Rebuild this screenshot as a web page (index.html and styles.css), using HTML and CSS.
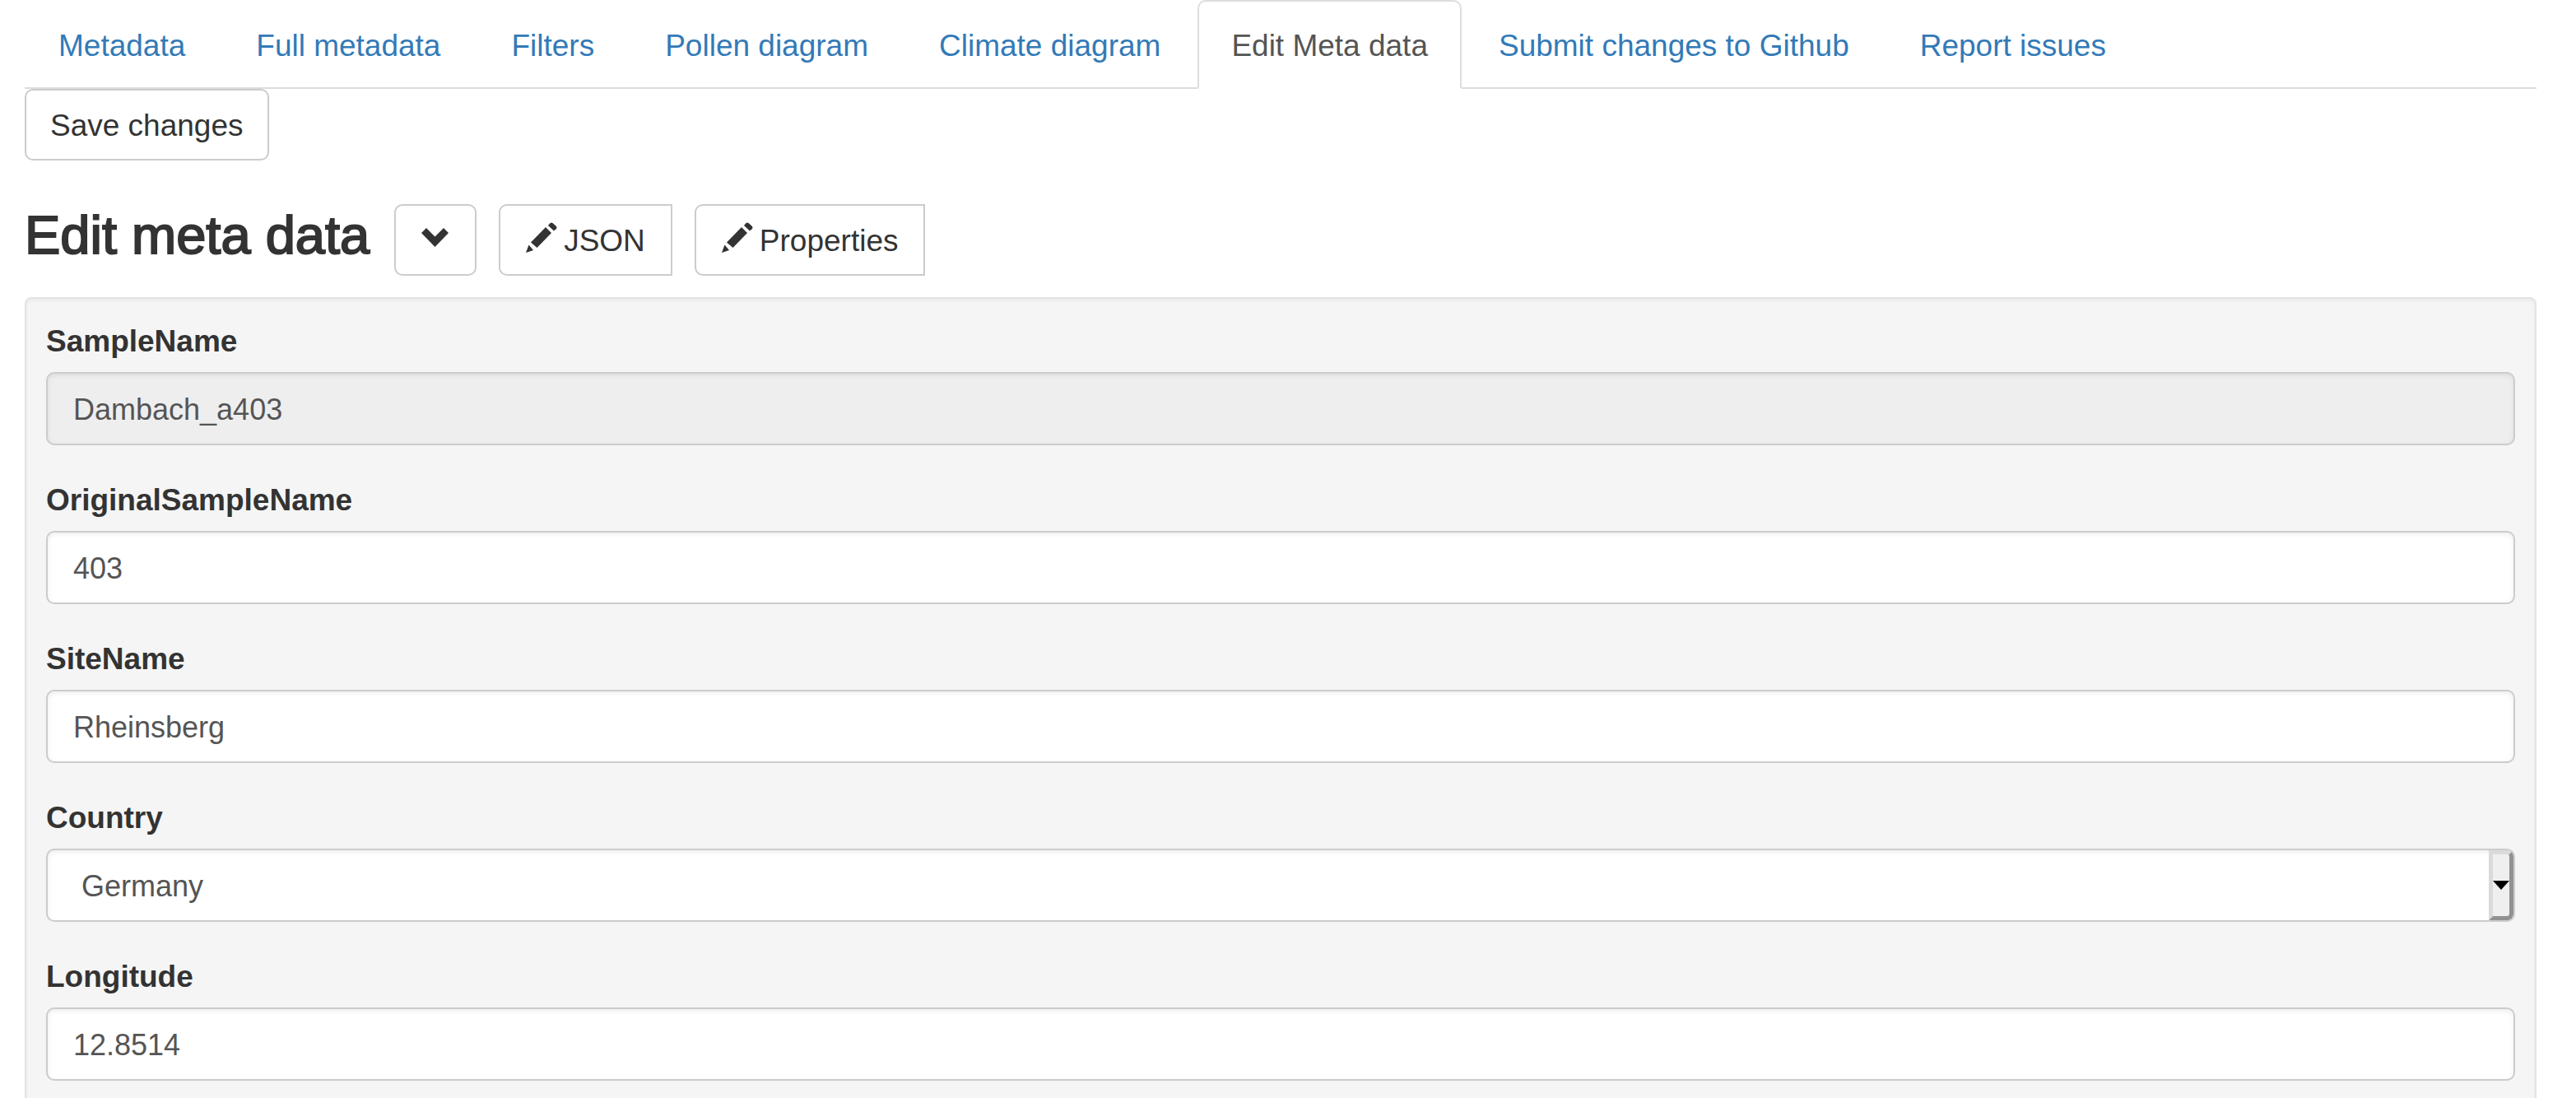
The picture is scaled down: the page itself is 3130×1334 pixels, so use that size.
FILE: index.html
```html
<!DOCTYPE html>
<html lang="en">
<head>
<meta charset="utf-8">
<title>Edit Meta data</title>
<link rel="stylesheet" href="styles.css">
</head>
<body>
<nav>
  <ul class="tabs">
    <li><a class="tab" href="#metadata">Metadata</a></li>
    <li><a class="tab" href="#full-metadata">Full metadata</a></li>
    <li><a class="tab" href="#filters">Filters</a></li>
    <li><a class="tab" href="#pollen">Pollen diagram</a></li>
    <li><a class="tab" href="#climate">Climate diagram</a></li>
    <li><a class="tab tab-active" href="#edit" aria-current="page">Edit Meta data</a></li>
    <li><a class="tab" href="#submit">Submit changes to Github</a></li>
    <li><a class="tab" href="#issues">Report issues</a></li>
  </ul>
</nav>
<main>
  <button class="btn" type="button">Save changes</button>
  <header class="editor-head">
    <h3 class="title">Edit meta data</h3>
    <button class="btn" type="button" aria-label="Collapse">
      <svg class="icon" viewBox="0 0 38 37" aria-hidden="true"><path d="M8 7L18.500 17.500 29 7 35 13 18.500 30 2 13z"/></svg>
    </button>
    <button class="btn btn-group-first" type="button">
      <svg class="icon" viewBox="0 0 38 37" aria-hidden="true"><path d="M0 37L3.500 27.500 9 34zM6 24.500L24 6 31 13 13.500 31zM27 4L29.500 1Q31 0 32.500 1L37 5Q38 6.500 37 8L34 10.500z"/></svg>
      JSON
    </button>
    <button class="btn btn-group-first" type="button">
      <svg class="icon" viewBox="0 0 38 37" aria-hidden="true"><path d="M0 37L3.500 27.500 9 34zM6 24.500L24 6 31 13 13.500 31zM27 4L29.500 1Q31 0 32.500 1L37 5Q38 6.500 37 8L34 10.500z"/></svg>
      Properties
    </button>
  </header>
  <form class="well">
    <div class="field">
      <label for="sample">SampleName</label>
      <input class="control" id="sample" type="text" value="Dambach_a403" readonly>
    </div>
    <div class="field">
      <label for="original">OriginalSampleName</label>
      <input class="control" id="original" type="text" value="403">
    </div>
    <div class="field">
      <label for="site">SiteName</label>
      <input class="control" id="site" type="text" value="Rheinsberg">
    </div>
    <div class="field">
      <label for="country">Country</label>
      <div class="select-wrap">
        <select class="control control-select" id="country"><option>Germany</option></select>
        <span class="select-arrow" aria-hidden="true"></span>
      </div>
    </div>
    <div class="field">
      <label for="longitude">Longitude</label>
      <input class="control" id="longitude" type="text" value="12.8514">
    </div>
  </form>
</main>
</body>
</html>
```
FILE: styles.css
```css
* { box-sizing: border-box; }

body {
  margin: 0;
  padding: 0 48px 0 30px;
  background: #fff;
  color: #333;
  font: 37px/52px "Liberation Sans", Arial, sans-serif;
}

/* Tabs */
.tabs {
  display: flex;
  gap: 4px;
  margin: 0;
  padding: 0;
  list-style: none;
  border-bottom: 2px solid #ddd;
}
.tab {
  display: block;
  margin-bottom: -2px;
  padding: 28px 39px 24px;
  border: 2px solid transparent;
  border-radius: 10px 10px 0 0;
  color: #337ab7;
  text-decoration: none;
}
.tab-active {
  border-color: #ddd;
  border-bottom-color: #fff;
  background: #fff;
  color: #555;
}

/* Buttons */
.btn {
  display: inline-flex;
  align-items: center;
  gap: 8px;
  height: 87px;
  padding: 2px 29px 0;
  border: 2px solid #ccc;
  border-radius: 10px;
  background: #fff;
  color: #333;
  font: inherit;
}
.btn-group-first {
  padding: 2px 31px 0;
  border-radius: 10px 0 0 10px;
}
.icon {
  width: 38px;
  height: 37px;
  margin-bottom: 8px;
  fill: currentColor;
}

/* Editor */
main {
  display: flex;
  flex-direction: column;
  align-items: flex-start;
}
.editor-head {
  display: flex;
  align-items: center;
  gap: 27px;
  margin: 53px 0 26px;
}
.title {
  margin: 0;
  padding: 0 3px 12px 0;
  font-size: 65px;
  font-weight: 400;
  line-height: 72px;
  -webkit-text-stroke: 2px currentColor;
}
.well {
  width: 100%;
  padding: 25px 24px;
  border: 2px solid #e3e3e3;
  border-radius: 8px;
  background: #f5f5f5;
  box-shadow: inset 0 2px 4px rgba(0, 0, 0, .05);
}
.field { margin-bottom: 40px; }
.field label {
  display: block;
  padding-top: 1px;
  margin-bottom: 11px;
  font-weight: 700;
}
.control {
  display: block;
  width: 100%;
  height: 89px;
  padding: 2px 31px 0;
  border: 2px solid #ccc;
  border-radius: 10px;
  background: #fff;
  color: #555;
  font: inherit;
  font-size: 36px;
  box-shadow: inset 0 2px 6px rgba(0, 0, 0, .08);
}
.control[readonly] { background: #eee; }
.select-wrap { position: relative; }
.control-select {
  appearance: none;
  padding: 2px 41px 0;
}
.select-arrow {
  position: absolute;
  inset: 2px 2px 2px auto;
  display: grid;
  place-items: center;
  width: 30px;
  border: 5px solid;
  border-color: #dadada #919191 #919191 #dadada;
  border-radius: 0 8px 8px 0;
  background: #efefef;
  pointer-events: none;
}
.select-arrow::before {
  content: "";
  width: 20px;
  height: 11px;
  background: #000;
  clip-path: polygon(0 0, 100% 0, 50% 100%);
}
```
